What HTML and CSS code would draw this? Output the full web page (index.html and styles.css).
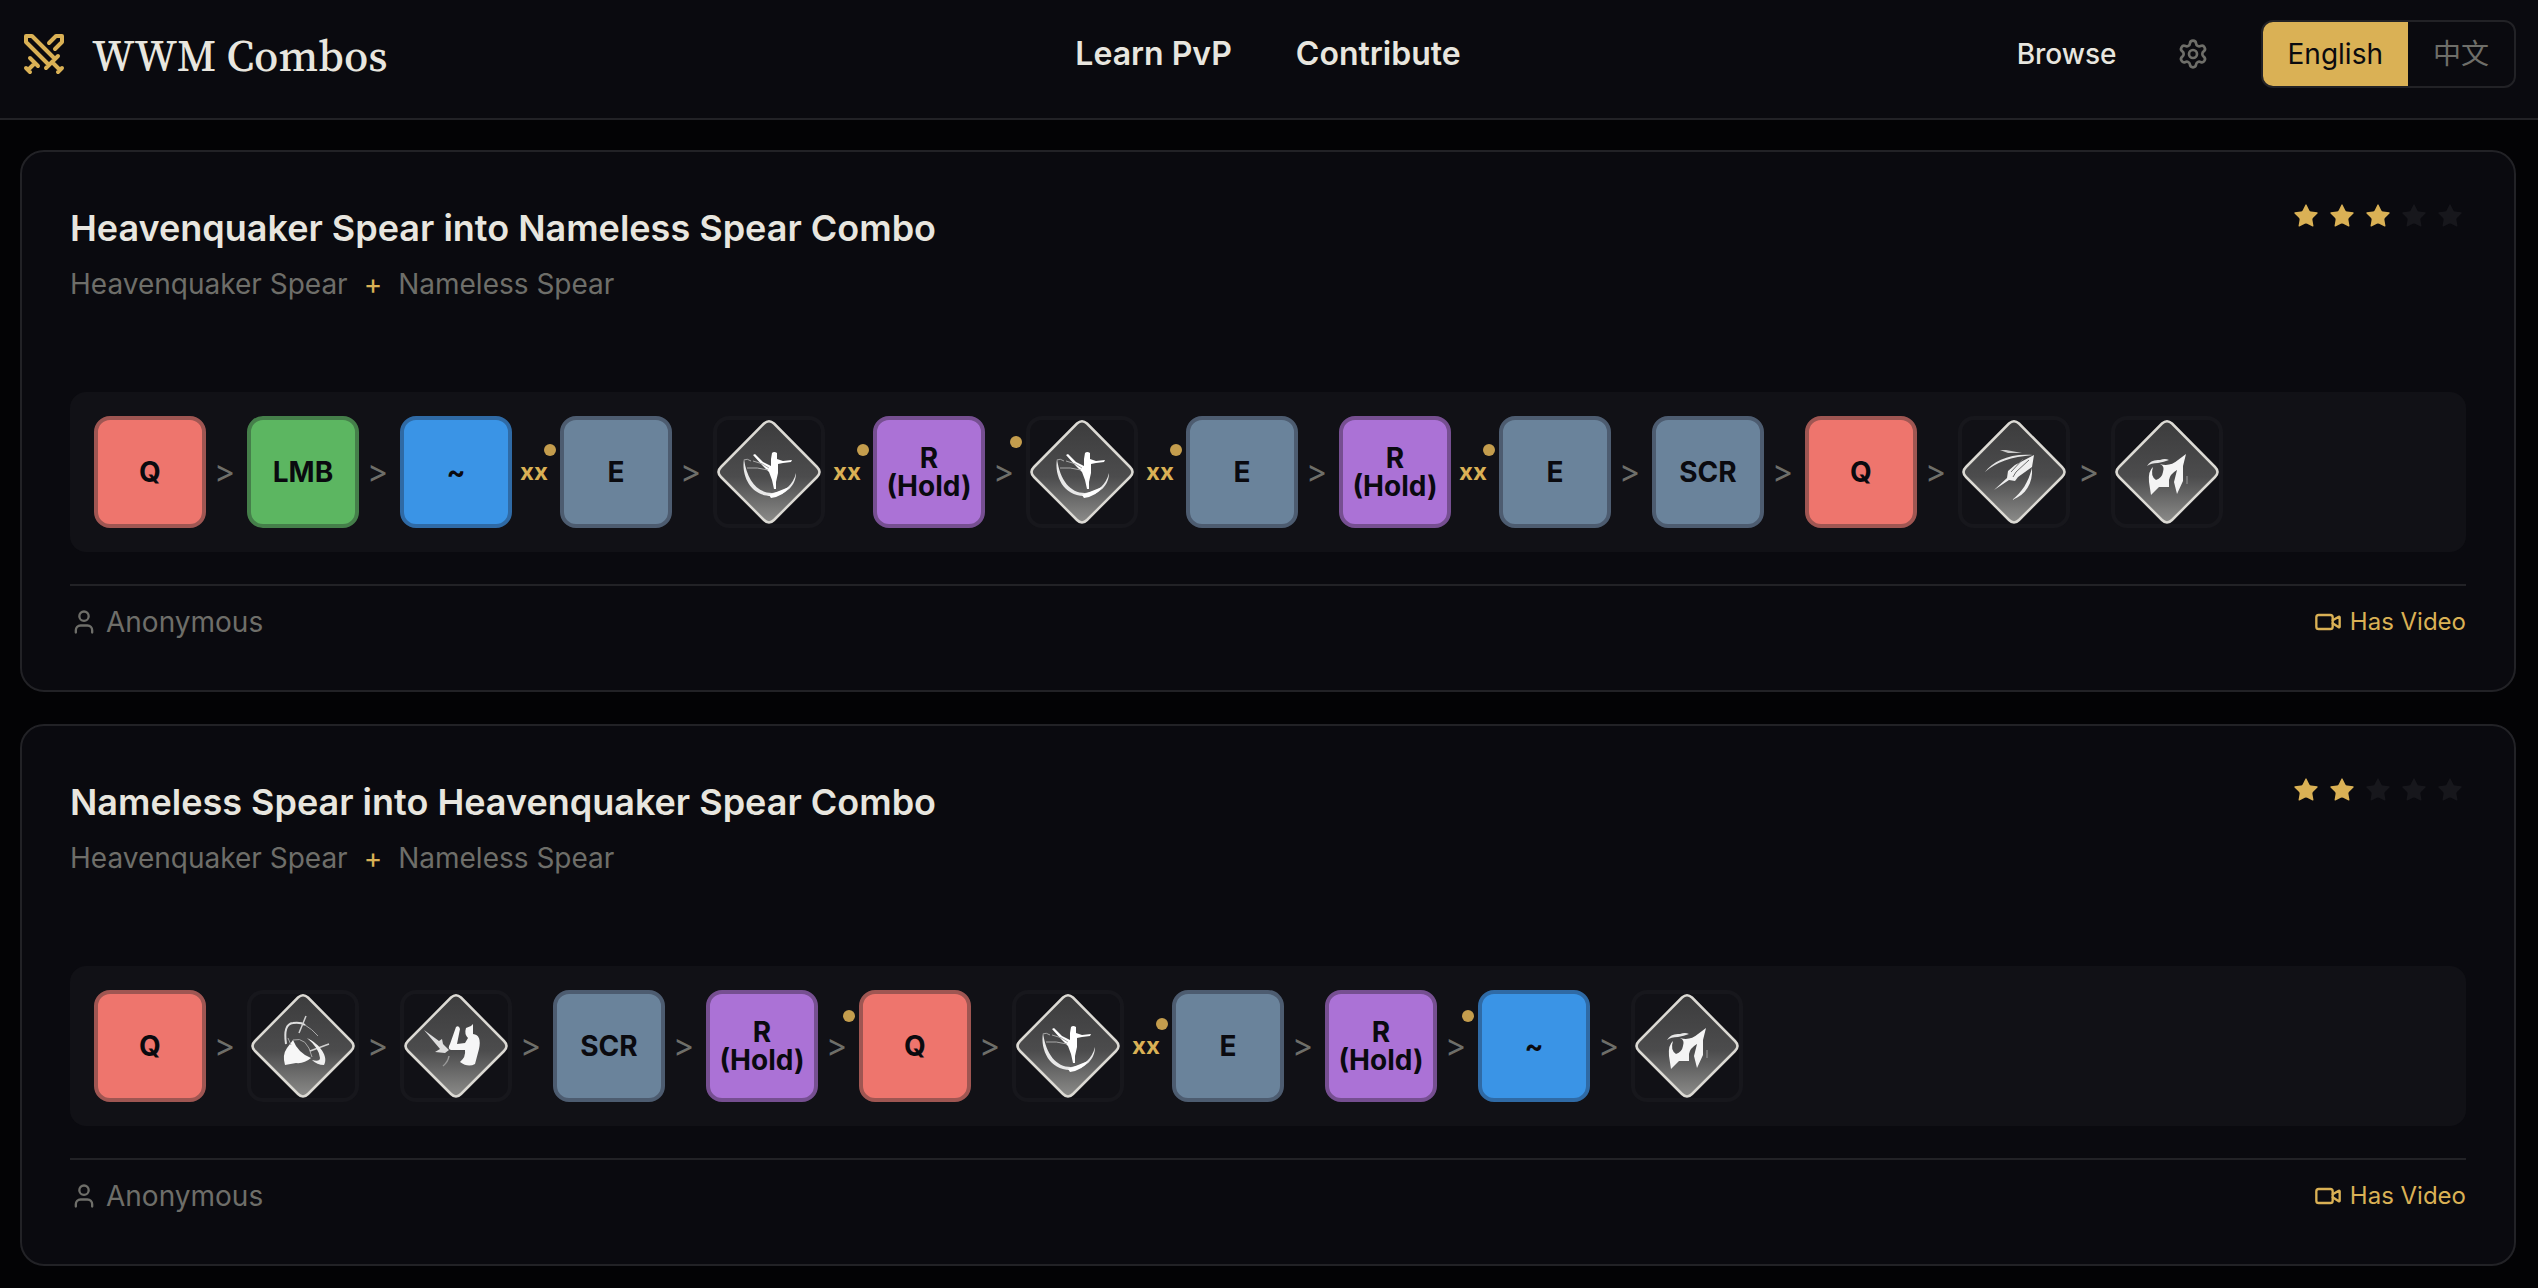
FILE: index.html
```html
<!DOCTYPE html>
<html lang="en">
<head>
<meta charset="utf-8">
<title>WWM Combos</title>
<link rel="stylesheet" href="styles.css">
</head>
<body>
<svg class="sprite" aria-hidden="true">
  <defs>
    <linearGradient id="plate" x1="0" y1="0" x2="0" y2="1">
      <stop offset="0" stop-color="#3c3c3d"/>
      <stop offset=".55" stop-color="#4c4c4d"/>
      <stop offset="1" stop-color="#8c8c8a"/>
    </linearGradient>
    <path id="diamond" d="M51 7.500Q56 3 61 7.500L104 51Q109 56 104 61L61 104Q56 109 51 104L8 61Q3 56 8 51Z" fill="url(#plate)" stroke="#dcdad4" stroke-width="2.500"/>
    <symbol id="star" viewBox="0 0 24 24"><path d="M11.525 2.295a.53.53 0 0 1 .95 0l2.310 4.679a2.123 2.123 0 0 0 1.595 1.160l5.166.756a.53.53 0 0 1 .294.904l-3.736 3.638a2.123 2.123 0 0 0-.611 1.878l.882 5.140a.53.53 0 0 1-.771.560l-4.618-2.428a2.122 2.122 0 0 0-1.973 0L6.396 21.010a.53.53 0 0 1-.77-.56l.881-5.139a2.122 2.122 0 0 0-.611-1.879L2.160 9.795a.53.53 0 0 1 .294-.906l5.165-.755a2.122 2.122 0 0 0 1.597-1.160z" fill="currentColor"/></symbol>
    <symbol id="user" viewBox="0 0 24 24"><path d="M19 21v-2a4 4 0 0 0-4-4H9a4 4 0 0 0-4 4v2"/><circle cx="12" cy="7" r="4"/></symbol>
    <symbol id="video" viewBox="0 0 24 24"><path d="m16 13 5.223 3.482a.5.5 0 0 0 .777-.416V7.870a.5.5 0 0 0-.752-.432L16 10.500"/><rect x="2" y="6" width="14" height="12" rx="2"/></symbol>
    <symbol id="dancer" viewBox="0 0 112 112">
      <use href="#diamond"/>
      <path d="M31 43C28 60 38 80 58 80C74 79 83 69 83 57C80 69 72 76 59 77C44 77 34 64 31 43Z" fill="#e8e8e8"/>
      <path d="M56 79Q66 75 76 71Q71 80 58 82Z" fill="#fff"/>
      <path d="M59 37Q61 35 64 37L64 43L70 45L79 44L78 46L70 47L65 48L65 57L63 66L63 73L61 73L59 64L56 56L49 49L40 39L42 38L50 46L58 50L58 43Z" fill="#fff"/>
      <path d="M31 44Q34 42 38 45M34 52Q44 51 55 54M40 45Q50 47 56 52" fill="none" stroke="#a8a8a8" stroke-width="1"/>
    </symbol>
    <symbol id="arrow" viewBox="0 0 112 112">
      <use href="#diamond"/>
      <path d="M42 34L48 34L64 37L50 37Z" fill="#c9c9c9"/>
      <path d="M27 56C35 45 52 37 75 39C53 41 38 46 27 56Z" fill="#e5e5e5"/>
      <path d="M76 39L74 51L60 61L57 65L51 64L36 74L49 62L50 55L57 49Z" fill="#efefef"/>
      <path d="M71 44L58 56L55 61M65 43L53 56" fill="none" stroke="#6c6c6c" stroke-width="1"/>
      <path d="M74 52C75 67 68 79 54 84C64 76 70 67 74 52Z" fill="#efefef"/>
    </symbol>
    <symbol id="flame" viewBox="0 0 112 112">
      <use href="#diamond"/>
      <path d="M36 50Q40 43 49 44Q54 42 58 44Q53 46 47 47Q40 47 36 50Z" fill="#e6e6e6"/>
      <path d="M75 38L72 50L72 65L66 78L63 66L66 54Q59 58 58 64L58 71L48 71L40 79L38 66Q37 55 42 51Q39 60 45 64Q51 62 52 56Q54 50 49 48Q59 51 67 44Z" fill="#f4f4f4"/>
      <path d="M76 60L76 68" stroke="#999" stroke-width="1"/>
    </symbol>
    <symbol id="sail" viewBox="0 0 112 112">
      <use href="#diamond"/>
      <path d="M46 50Q51 63 64 68Q57 74 49 73L38 75Q35 65 40 58Z" fill="#f7f7f7"/>
      <path d="M39 54Q36 34 46 33Q54 32 58 35" fill="none" stroke="#dedede" stroke-width="2"/>
      <path d="M58 35Q65 39 71 46M41 48L44 55M46 50Q60 46 65 67" fill="none" stroke="#a8a8a8" stroke-width="1"/>
      <path d="M59 26L52 43M82 54L63 61" stroke="#d0d0d0" stroke-width="1.500"/>
      <path d="M60 48C73 54 82 67 77 75Q70 75 65 70Q73 72 73 68Q72 58 60 48Z" fill="#efefef"/>
    </symbol>
    <symbol id="strike" viewBox="0 0 112 112">
      <use href="#diamond"/>
      <path d="M56 37Q59 35 60 39L57 54L65 53L68 48Q64 44 66 38L71 36L73 34L73 44Q82 45 79 59L75 74Q68 78 60 72Q66 67 65 60L51 60Q47 59 50 54Z" fill="#f6f6f6"/>
      <path d="M24 40L39 51L42 49L43 54L49 60L45 63L35 62L40 59Z" fill="#dedede"/>
      <path d="M49 66Q48 72 43 76" fill="none" stroke="#999" stroke-width="1.500"/>
    </symbol>
  </defs>
</svg>

<header class="site-header">
  <a class="brand" href="#">
    <svg class="line-icon brand-mark" viewBox="0 0 24 24" aria-hidden="true"><path d="M14.500 17.500 3 6V3h3l11.500 11.500M13 19l6-6M16 16l4 4M19 21l2-2M14.500 6.500 18 3h3v3l-3.500 3.500M5 14l4 4M7 17l-3 3M3 19l2 2"/></svg>
    <span class="brand-name">WWM Combos</span>
  </a>
  <nav class="main-nav">
    <a href="#">Learn PvP</a>
    <a href="#">Contribute</a>
  </nav>
  <div class="tools">
    <a class="browse" href="#">Browse</a>
    <button class="icon-button" type="button" aria-label="Settings">
      <svg class="line-icon gear" viewBox="0 0 24 24" aria-hidden="true"><path d="M9.671 4.136a2.340 2.340 0 0 1 4.659 0 2.340 2.340 0 0 0 3.319 1.915 2.340 2.340 0 0 1 2.330 4.033 2.340 2.340 0 0 0 0 3.831 2.340 2.340 0 0 1-2.330 4.033 2.340 2.340 0 0 0-3.319 1.915 2.340 2.340 0 0 1-4.659 0 2.340 2.340 0 0 0-3.320-1.915 2.340 2.340 0 0 1-2.330-4.033 2.340 2.340 0 0 0 0-3.831A2.340 2.340 0 0 1 6.350 6.051a2.340 2.340 0 0 0 3.319-1.915"/><circle cx="12" cy="12" r="3"/></svg>
    </button>
    <div class="language">
      <button class="language-option active" type="button">English</button>
      <button class="language-option" type="button" lang="zh">中文</button>
    </div>
  </div>
</header>

<main class="combo-list">
  <article class="card">
    <div class="card-head">
      <div>
        <h2 class="card-title">Heavenquaker Spear into Nameless Spear Combo</h2>
        <p class="weapons"><span>Heavenquaker Spear</span><span class="plus">+</span><span>Nameless Spear</span></p>
      </div>
      <div class="stars" role="img" aria-label="3 of 5 stars">
        <svg class="star on"><use href="#star"/></svg><svg class="star on"><use href="#star"/></svg><svg class="star on"><use href="#star"/></svg><svg class="star"><use href="#star"/></svg><svg class="star"><use href="#star"/></svg>
      </div>
    </div>
    <div class="sequence">
      <span class="key red">Q</span><span class="link">&gt;</span>
      <span class="key green">LMB</span><span class="link">&gt;</span>
      <span class="key blue">~</span><span class="link cancel">xx<i class="dot"></i></span>
      <span class="key slate">E</span><span class="link">&gt;</span>
      <span class="key skill"><svg><use href="#dancer"/></svg></span><span class="link cancel">xx<i class="dot"></i></span>
      <span class="key purple">R<br>(Hold)</span><span class="link">&gt;<i class="dot"></i></span>
      <span class="key skill"><svg><use href="#dancer"/></svg></span><span class="link cancel">xx<i class="dot"></i></span>
      <span class="key slate">E</span><span class="link">&gt;</span>
      <span class="key purple">R<br>(Hold)</span><span class="link cancel">xx<i class="dot"></i></span>
      <span class="key slate">E</span><span class="link">&gt;</span>
      <span class="key slate">SCR</span><span class="link">&gt;</span>
      <span class="key red">Q</span><span class="link">&gt;</span>
      <span class="key skill"><svg><use href="#arrow"/></svg></span><span class="link">&gt;</span>
      <span class="key skill"><svg><use href="#flame"/></svg></span>
    </div>
    <footer class="card-foot">
      <span class="author"><svg class="line-icon small"><use href="#user"/></svg>Anonymous</span>
      <span class="has-video"><svg class="line-icon small"><use href="#video"/></svg>Has Video</span>
    </footer>
  </article>

  <article class="card">
    <div class="card-head">
      <div>
        <h2 class="card-title">Nameless Spear into Heavenquaker Spear Combo</h2>
        <p class="weapons"><span>Heavenquaker Spear</span><span class="plus">+</span><span>Nameless Spear</span></p>
      </div>
      <div class="stars" role="img" aria-label="2 of 5 stars">
        <svg class="star on"><use href="#star"/></svg><svg class="star on"><use href="#star"/></svg><svg class="star"><use href="#star"/></svg><svg class="star"><use href="#star"/></svg><svg class="star"><use href="#star"/></svg>
      </div>
    </div>
    <div class="sequence">
      <span class="key red">Q</span><span class="link">&gt;</span>
      <span class="key skill"><svg><use href="#sail"/></svg></span><span class="link">&gt;</span>
      <span class="key skill"><svg><use href="#strike"/></svg></span><span class="link">&gt;</span>
      <span class="key slate">SCR</span><span class="link">&gt;</span>
      <span class="key purple">R<br>(Hold)</span><span class="link">&gt;<i class="dot"></i></span>
      <span class="key red">Q</span><span class="link">&gt;</span>
      <span class="key skill"><svg><use href="#dancer"/></svg></span><span class="link cancel">xx<i class="dot"></i></span>
      <span class="key slate">E</span><span class="link">&gt;</span>
      <span class="key purple">R<br>(Hold)</span><span class="link">&gt;<i class="dot"></i></span>
      <span class="key blue">~</span><span class="link">&gt;</span>
      <span class="key skill"><svg><use href="#flame"/></svg></span>
    </div>
    <footer class="card-foot">
      <span class="author"><svg class="line-icon small"><use href="#user"/></svg>Anonymous</span>
      <span class="has-video"><svg class="line-icon small"><use href="#video"/></svg>Has Video</span>
    </footer>
  </article>
</main>
</body>
</html>
```
FILE: styles.css
```css
:root {
  --page: #030305;
  --surface: #0a0a0f;
  --raised: #111116;
  --line: #222226;
  --text: #e8e6df;
  --muted: #6e6e69;
  --gold: #dab155;
}

* {
  box-sizing: border-box;
}

body {
  margin: 0;
  background: var(--page);
  color: var(--text);
  font: 400 28px/40px Inter, "Noto Sans CJK SC", sans-serif;
}

a {
  color: inherit;
  text-decoration: none;
}

button {
  border: 0;
  padding: 0;
  background: none;
  color: inherit;
  font: inherit;
}

svg {
  display: block;
}

.sprite {
  position: absolute;
  width: 0;
  height: 0;
}

.line-icon {
  fill: none;
  stroke: currentColor;
  stroke-width: 2;
  stroke-linecap: round;
  stroke-linejoin: round;
}

.small {
  width: 28px;
  height: 28px;
}

/* Header */
.site-header {
  display: grid;
  grid-template-columns: 1fr auto 1fr;
  align-items: center;
  padding: 20px 22px 30px 20px;
  border-bottom: 2px solid var(--line);
  background: var(--surface);
}

.brand {
  display: flex;
  align-items: center;
  gap: 24px;
}

.brand-mark {
  width: 48px;
  height: 48px;
  color: var(--gold);
}

.brand-name {
  padding-top: 4px;
  font: 500 44px/64px "Source Serif 4", "Noto Serif CJK SC", "Noto Serif SC", "Liberation Serif", serif;
}

.main-nav {
  display: flex;
  gap: 64px;
  font-size: 32px;
  font-weight: 600;
}

.tools {
  display: flex;
  align-items: center;
  justify-content: flex-end;
}

.browse {
  margin-right: 60px;
  font-weight: 500;
}

.icon-button {
  margin-right: 52px;
  color: var(--muted);
}

.gear {
  width: 32px;
  height: 32px;
}

.language {
  display: flex;
  overflow: hidden;
  border: 2px solid var(--line);
  border-radius: 12px;
}

.language-option {
  padding: 12px 25px;
  color: var(--muted);
}

.language-option.active {
  background: var(--gold);
  color: var(--surface);
}

/* Combo cards */
.combo-list {
  display: grid;
  gap: 32px;
  padding: 30px 22px 22px 20px;
}

.card {
  padding: 48px;
  border: 2px solid var(--line);
  border-radius: 24px;
  background: var(--surface);
}

.card-head {
  display: flex;
  justify-content: space-between;
  margin-bottom: 88px;
}

.card-title {
  margin: 0 0 8px;
  font-size: 36px;
  line-height: 56px;
  font-weight: 600;
}

.weapons {
  display: flex;
  gap: 16px;
  margin: 0;
  color: var(--muted);
}

.plus {
  color: var(--gold);
}

.stars {
  display: flex;
  gap: 4px;
}

.star {
  width: 32px;
  height: 32px;
  padding: 2px;
  color: #17171c;
}

.star.on {
  color: var(--gold);
}

.sequence {
  display: flex;
  flex-wrap: wrap;
  padding: 24px;
  border-radius: 16px;
  background: var(--raised);
}

.key {
  display: flex;
  align-items: center;
  justify-content: center;
  width: 112px;
  height: 112px;
  border: 4px solid;
  border-radius: 16px;
  color: var(--surface);
  font-weight: 700;
  line-height: 28px;
  text-align: center;
}

.red {
  border-color: #9f5652;
  background: #ee756d;
}

.green {
  border-color: #457f4a;
  background: #5cb661;
}

.blue {
  border-color: #2f6aa5;
  background: #3a94e6;
}

.slate {
  border-color: #4d5c70;
  background: #6a839b;
}

.purple {
  border-color: #764f91;
  background: #ab72d6;
}

.skill {
  border-color: #17171c;
}

.skill svg {
  flex: none;
  width: 112px;
  height: 112px;
}

.link {
  position: relative;
  display: flex;
  align-items: center;
  justify-content: center;
  width: 41px;
  padding-right: 4px;
  color: var(--muted);
  font-size: 32px;
}

.cancel {
  width: 48px;
  color: var(--gold);
  font-size: 24px;
  font-weight: 700;
}

/* Timing marker floating over the connector */
.dot {
  position: absolute;
  top: 20px;
  right: 4px;
  width: 12px;
  height: 12px;
  border-radius: 50%;
  background: #c49d4d;
}

.cancel .dot {
  top: 28px;
}

.card-foot {
  display: flex;
  align-items: center;
  justify-content: space-between;
  margin-top: 32px;
  padding-top: 16px;
  border-top: 2px solid var(--line);
}

.author,
.has-video {
  display: flex;
  align-items: center;
  gap: 8px;
  color: var(--muted);
}

.has-video {
  color: var(--gold);
  font-size: 24px;
}
```
